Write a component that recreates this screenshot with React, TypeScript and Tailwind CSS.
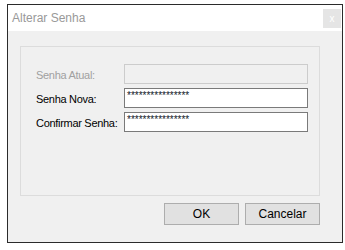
import React from 'react';

const font = { fontFamily: '"Liberation Sans", Arial, sans-serif' };

const Field: React.FC<{ label: string; value: string; disabled?: boolean }> = ({ label, value, disabled }) => (
    <div className="flex items-center h-[20px]">
        <span className={`w-[88px] text-[11px] leading-none pt-[2px] tracking-[-0.3px] ${disabled ? 'text-[#a0a0a0]' : 'text-black'}`}>{label}</span>
        <div
            className={`w-[184px] h-[20px] border ${disabled ? 'border-[#cccccc] bg-[#f0f0f0]' : 'border-[#7a7a7a] bg-white'} pl-[2px] pt-[2px]`}
        >
            <span className="block text-[10px] leading-none text-[#101828]">{value}</span>
        </div>
    </div>
);

export default function App() {
    return (
        <div className="w-[345px] h-[250px] bg-white pt-[4px] pl-[7px]" style={font}>
            <div className="w-[336px] h-[239px] border border-[#2b2b2b] flex flex-col bg-[#f0f0f0]">
                <div className="h-[26px] bg-white flex items-start justify-between">
                    <span className="text-[12px] text-[#999999] pl-[4px] pt-[7px] leading-none">Alterar Senha</span>
                    <div className="w-[18px] h-[19px] mt-[4px] mr-[1px] bg-[#e5e5e5] flex items-center justify-center text-white text-[10px] leading-none">
                        x
                    </div>
                </div>
                <div className="flex-1 pl-[12px] pt-[15px]">
                    <div className="w-[300px] h-[150px] border border-[#dcdcdc] pl-[15px] pt-[17px] flex flex-col gap-[4px]">
                        <Field label="Senha Atual:" value="" disabled />
                        <Field label="Senha Nova:" value="****************" />
                        <Field label="Confirmar Senha:" value="****************" />
                    </div>
                    <div className="w-[300px] flex justify-end gap-[6px] mt-[7px]">
                        <button className="w-[75px] h-[22px] bg-[#e1e1e1] border border-[#adadad] text-[12px] text-black leading-none">OK</button>
                        <button className="w-[75px] h-[22px] bg-[#e1e1e1] border border-[#adadad] text-[12px] text-black leading-none">Cancelar</button>
                    </div>
                </div>
            </div>
        </div>
    );
}
